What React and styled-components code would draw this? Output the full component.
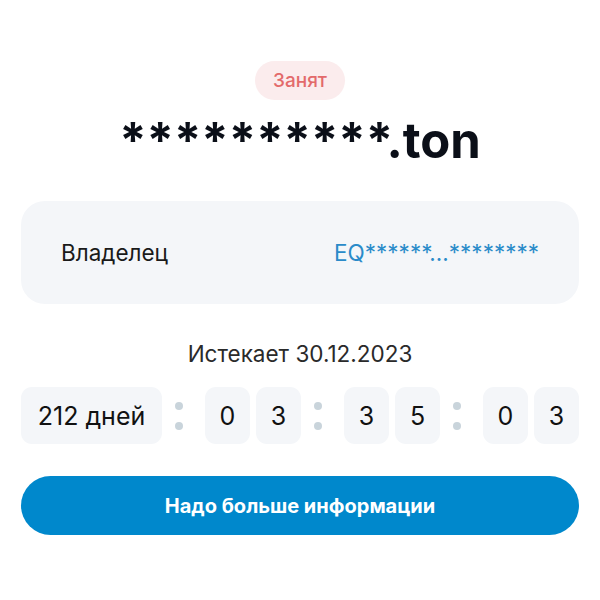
import styled, { createGlobalStyle } from 'styled-components'

const GlobalStyle = createGlobalStyle`
  html, body {
    margin: 0;
    padding: 0;
    background: #ffffff;
    font-family: Inter, "Noto Sans", sans-serif;
  }
`

const Page = styled.div`
  width: 600px;
  box-sizing: border-box;
  padding: 61px 21px 0 21px;
  display: flex;
  flex-direction: column;
  align-items: center;
`

const Badge = styled.div`
  height: 39px;
  padding: 0 18px;
  border-radius: 20px;
  background: #fbeced;
  color: #e36a6b;
  font-size: 19px;
  font-weight: 500;
  display: flex;
  align-items: center;
`

const Title = styled.h1`
  margin: 10px 0 0 0;
  font-size: 49px;
  line-height: 62px;
  font-weight: 700;
  color: #0b0f18;
`

const OwnerCard = styled.div`
  align-self: stretch;
  margin-top: 29px;
  height: 103px;
  box-sizing: border-box;
  padding: 0 40px;
  border-radius: 24px;
  background: #f4f6f9;
  display: flex;
  align-items: center;
  justify-content: space-between;
  font-size: 22.5px;
`

const Label = styled.span`
  color: #1a1a1a;
`

const Address = styled.span`
  color: #2a8bc9;
`

const Expires = styled.div`
  margin-top: 36px;
  font-size: 22.5px;
  line-height: 28px;
  color: #2a2a2a;
`

const Countdown = styled.div`
  align-self: stretch;
  margin-top: 19px;
  display: flex;
  align-items: center;
  justify-content: space-between;
`

const Group = styled.div`
  display: flex;
  gap: 6px;
`

const Cell = styled.div`
  height: 57px;
  min-width: ${p => (p.$wide ? '141px' : '45px')};
  box-sizing: border-box;
  border-radius: 11px;
  background: #f4f6f9;
  display: flex;
  align-items: center;
  justify-content: center;
  font-size: 25px;
  color: #111;
`

const Colon = styled.div`
  display: flex;
  flex-direction: column;
  gap: 12px;
  padding: 0 11px 0 1px;

  &::before, &::after {
    content: '';
    width: 8px;
    height: 8px;
    border-radius: 50%;
    background: #c9d4db;
  }
`

const MoreButton = styled.button`
  align-self: stretch;
  margin-top: 32px;
  height: 59px;
  border: none;
  border-radius: 30px;
  background: #0088cc;
  color: #fff;
  font-family: Inter, "Noto Sans", sans-serif;
  font-size: 20px;
  font-weight: 700;
  cursor: pointer;
`

export default function App() {
  return (
    <>
      <GlobalStyle />
      <Page>
        <Badge>Занят</Badge>
        <Title>**********.ton</Title>
        <OwnerCard>
          <Label>Владелец</Label>
          <Address>EQ******...********</Address>
        </OwnerCard>
        <Expires>Истекает 30.12.2023</Expires>
        <Countdown>
          <Cell $wide>212 дней</Cell>
          <Colon />
          <Group>
            <Cell>0</Cell>
            <Cell>3</Cell>
          </Group>
          <Colon />
          <Group>
            <Cell>3</Cell>
            <Cell>5</Cell>
          </Group>
          <Colon />
          <Group>
            <Cell>0</Cell>
            <Cell>3</Cell>
          </Group>
        </Countdown>
        <MoreButton>Надо больше информации</MoreButton>
      </Page>
    </>
  )
}
